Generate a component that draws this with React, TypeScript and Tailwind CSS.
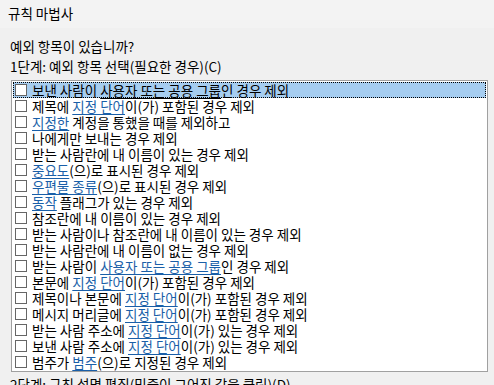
import React from "react";

type Part = string | { link: string };

const rows: Part[][] = [
  ["보낸 사람이 ", { link: "사용자 또는 공용 그룹" }, "인 경우 제외"],
  ["제목에 ", { link: "지정 단어" }, "이(가) 포함된 경우 제외"],
  [{ link: "지정한" }, " 계정을 통했을 때를 제외하고"],
  ["나에게만 보내는 경우 제외"],
  ["받는 사람란에 내 이름이 있는 경우 제외"],
  [{ link: "중요도" }, "(으)로 표시된 경우 제외"],
  [{ link: "우편물 종류" }, "(으)로 표시된 경우 제외"],
  [{ link: "동작" }, " 플래그가 있는 경우 제외"],
  ["참조란에 내 이름이 있는 경우 제외"],
  ["받는 사람이나 참조란에 내 이름이 있는 경우 제외"],
  ["받는 사람란에 내 이름이 없는 경우 제외"],
  ["받는 사람이 ", { link: "사용자 또는 공용 그룹" }, "인 경우 제외"],
  ["본문에 ", { link: "지정 단어" }, "이(가) 포함된 경우 제외"],
  ["제목이나 본문에 ", { link: "지정 단어" }, "이(가) 포함된 경우 제외"],
  ["메시지 머리글에 ", { link: "지정 단어" }, "이(가) 포함된 경우 제외"],
  ["받는 사람 주소에 ", { link: "지정 단어" }, "이(가) 있는 경우 제외"],
  ["보낸 사람 주소에 ", { link: "지정 단어" }, "이(가) 있는 경우 제외"],
  ["범주가 ", { link: "범주" }, "(으)로 지정된 경우 제외"],
];

export default function App() {
  return (
    <div
      className="w-[494px] h-[385px] overflow-hidden bg-[#f0f0f0] text-[13.5px] text-black"
      style={{ fontFamily: '"Noto Sans CJK KR", "Noto Sans", sans-serif' }}
    >
      <div className="h-[28px] bg-[#f3f3f3] pl-[8px] pt-[4px] leading-[18px]">규칙 마법사</div>
      <div className="pl-[10px] pt-[10px] leading-[16px]">예외 항목이 있습니까?</div>
      <div className="pl-[10px] pt-[4px] leading-[16px]">1단계: 예외 항목 선택(필요한 경우)(C)</div>
      <div className="ml-[11px] mt-[6px] w-[477px] h-[292px] border border-[#a0a0a0] bg-white p-[1px]">
        {rows.map((parts, i) => {
          const sel = i === 0;
          return (
            <div
              key={i}
              className={
                "h-[16px] flex items-center leading-[16px] whitespace-nowrap " +
                (sel ? "bg-[#a6cdf0] border border-dotted border-black" : "border border-transparent")
              }
            >
              <div className="ml-[1px] w-[12px] h-[12px] border border-[#666] bg-white shrink-0" />
              <div className="ml-[5px] h-[16px] leading-[16px]">
                {parts.map((p, j) =>
                  typeof p === "string" ? (
                    <span key={j}>{p}</span>
                  ) : (
                    <span
                      key={j}
                      className={
                        "underline underline-offset-[2px] " +
                        (sel ? "text-black decoration-black" : "text-[#1a5fa8] decoration-[#1a5fa8]")
                      }
                    >
                      {p.link}
                    </span>
                  )
                )}
              </div>
            </div>
          );
        })}
      </div>
      <div className="pl-[10px] pt-[4px] leading-[16px]">2단계: 규칙 설명 편집(밑줄이 그어진 값을 클릭)(D)</div>
    </div>
  );
}
